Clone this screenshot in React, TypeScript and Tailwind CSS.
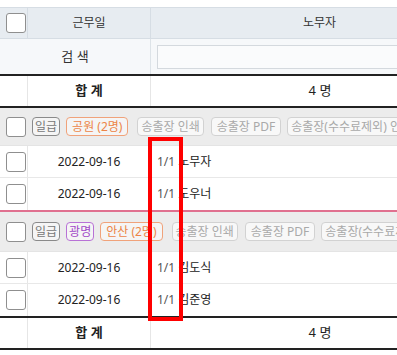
import React from 'react'

const font = { fontFamily: '"Noto Sans", "Noto Sans CJK KR", sans-serif' }

const Checkbox: React.FC = () => (
  <span className="inline-block w-[20px] h-[20px] shrink-0 rounded-[3px] border border-[#8f8f8f] bg-white" />
)

type Tone = 'dark' | 'orange' | 'purple' | 'gray'

const toneClasses: Record<Tone, string> = {
  dark: 'border-[#8a8a8a] text-[#777] bg-[#f5f5f5]',
  orange: 'border-[#f0a27a] text-[#ec8548] bg-[#f5f5f5]',
  purple: 'border-[#b872d6] text-[#a248c8] bg-[#f5f5f5]',
  gray: 'border-[#d2d2d2] text-[#a9a9a9] bg-[#f8f8f8]',
}

const Tag: React.FC<{ tone: Tone; children: React.ReactNode; className?: string }> = ({
  tone,
  children,
  className = 'px-[3px]',
}) => (
  <span
    className={`shrink-0 whitespace-nowrap h-[19px] leading-[17px] text-[12px] rounded-[4px] border ${toneClasses[tone]} ${className}`}
  >
    {children}
  </span>
)

const GroupRow: React.FC<{ tags: { tone: Tone; label: string }[]; tall?: boolean }> = ({ tags, tall }) => (
  <div
    className={`${tall ? 'h-[40px]' : 'h-[38px]'} bg-[#ececec] flex items-center gap-[6px] pl-[6px] border-b border-[#e4e4e4]`}
  >
    <Checkbox />
    {tags.map((t) => (
      <Tag key={t.label} tone={t.tone} className={t.tone === 'orange' ? 'px-[5px]' : 'px-[2px]'}>
        {t.label}
      </Tag>
    ))}
    <Tag tone="gray" className="ml-[3px] px-[3px]">송출장 인쇄</Tag>
    <Tag tone="gray" className="ml-[1px] px-[5px]">송출장 PDF</Tag>
    <Tag tone="gray">송출장(수수료제외) 인쇄</Tag>
    <Tag tone="gray">송출장(수수료제외) PDF</Tag>
  </div>
)

const DataRow: React.FC<{ date: string; name: string; last?: boolean }> = ({ date, name, last }) => (
  <div
    className={`h-[32px] grid grid-cols-[28px_123px_1fr] bg-white ${last ? '' : 'border-b border-[#e8e8e8]'}`}
  >
    <div className="flex items-center pl-[6px] border-r border-[#e6e6e6]">
      <Checkbox />
    </div>
    <div className="flex items-center justify-center text-[12px] text-[#222] border-r border-[#e6e6e6]">
      {date}
    </div>
    <div className="flex items-center pl-[6px] text-[12px] text-[#222]">
      <span className="text-[#555]">1/1</span>
      <span className="ml-[3px]">{name}</span>
    </div>
  </div>
)

const SumRow: React.FC = () => (
  <div className="h-[30px] grid grid-cols-[28px_123px_338px_1fr] bg-white">
    <div className="border-r border-[#e6e6e6]" />
    <div className="flex items-center justify-center text-[13px] font-bold text-[#222] border-r border-[#e6e6e6]">
      합 계
    </div>
    <div className="flex items-center justify-center text-[13px] text-[#222]">4 명</div>
    <div />
  </div>
)

export default function App() {
  return (
    <div className="w-[397px] h-[355px] overflow-hidden bg-white relative" style={font}>
      <div className="w-[760px] pt-[7px]">
        {/* header */}
        <div className="h-[32px] grid grid-cols-[28px_123px_338px_1fr] bg-[#e7ecf1] border-t border-b border-[#d6dde4]">
          <div className="flex items-center pl-[6px] border-r border-[#d6dde4]">
            <Checkbox />
          </div>
          <div className="flex items-center justify-center text-[12px] text-[#333] border-r border-[#d6dde4]">
            근무일
          </div>
          <div className="flex items-center justify-center text-[12px] text-[#333] border-r border-[#d6dde4]">
            노무자
          </div>
          <div />
        </div>

        {/* search */}
        <div className="h-[37px] grid grid-cols-[151px_1fr] bg-[#f6f8fa] border-b-2 border-[#222]">
          <div className="flex items-center justify-center text-[13px] text-[#333] border-r border-[#dde3e8]">
            검 색
          </div>
          <div className="flex items-center pl-[6px]">
            <div className="w-[320px] h-[24px] bg-[#fafbfc] border border-[#d4d9de]" />
          </div>
        </div>

        <div className="border-b-2 border-[#222]">
          <SumRow />
        </div>

        <GroupRow
          tags={[
            { tone: 'dark', label: '일급' },
            { tone: 'orange', label: '공원 (2명)' },
          ]}
        />
        <DataRow date="2022-09-16" name="노무자" />
        <div className="border-b-2 border-[#e0708f]">
          <DataRow date="2022-09-16" name="도우너" last />
        </div>

        <GroupRow
          tall
          tags={[
            { tone: 'dark', label: '일급' },
            { tone: 'purple', label: '광명' },
            { tone: 'orange', label: '안산 (2명)' },
          ]}
        />
        <DataRow date="2022-09-16" name="김도식" />
        <div className="border-b-2 border-[#222]">
          <DataRow date="2022-09-16" name="김준영" last />
        </div>

        <div className="border-b-2 border-[#222]">
          <SumRow />
        </div>
      </div>

      {/* highlight annotation */}
      <div className="absolute left-[148px] top-[137px] w-[35px] h-[184px] border-[4px] border-[#ff0000] pointer-events-none" />
    </div>
  )
}
